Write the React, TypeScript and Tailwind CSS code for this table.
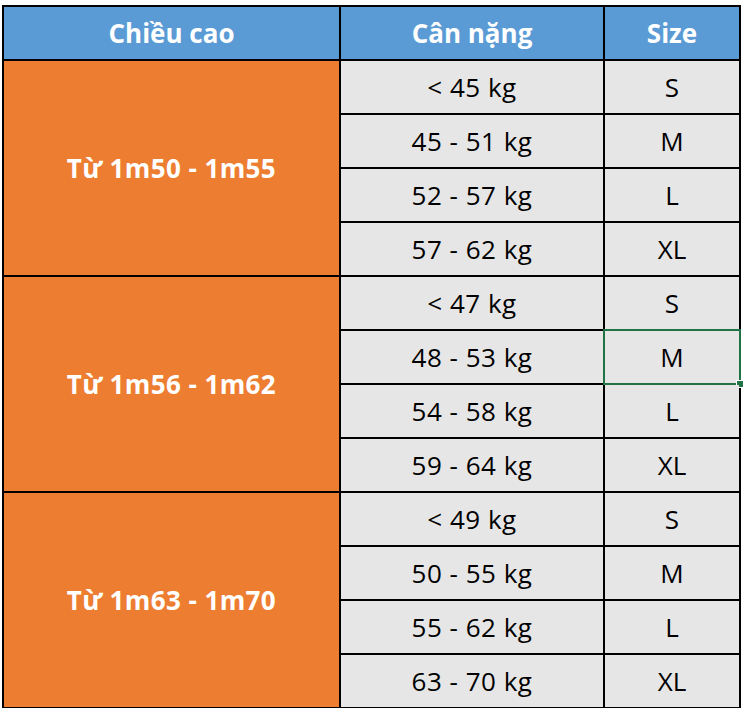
import React, { FC } from 'react';

type Group = { height: string; rows: [string, string][] };

const groups: Group[] = [
    {
        height: 'Từ 1m50 - 1m55',
        rows: [['< 45 kg', 'S'], ['45 - 51 kg', 'M'], ['52 - 57 kg', 'L'], ['57 - 62 kg', 'XL']],
    },
    {
        height: 'Từ 1m56 - 1m62',
        rows: [['< 47 kg', 'S'], ['48 - 53 kg', 'M'], ['54 - 58 kg', 'L'], ['59 - 64 kg', 'XL']],
    },
    {
        height: 'Từ 1m63 - 1m70',
        rows: [['< 49 kg', 'S'], ['50 - 55 kg', 'M'], ['55 - 62 kg', 'L'], ['63 - 70 kg', 'XL']],
    },
];

const font = { fontFamily: '"Open Sans", "Noto Sans", sans-serif' };

const App: FC = () => {
    return (
        <div className="w-[744px] h-[708px] bg-white pt-[5px] pl-[2px]" style={font}>
            <div className="grid w-[739px] grid-cols-[335px_262px_134px] auto-rows-[52px] gap-[2px] p-[2px] bg-black text-[26px]">
                {/* header */}
                {['Chiều cao', 'Cân nặng', 'Size'].map(h => (
                    <div key={h} className="flex items-center justify-center bg-[#5b9bd5] text-white font-bold">
                        {h}
                    </div>
                ))}

                {groups.map((g, gi) => (
                    <React.Fragment key={g.height}>
                        {g.rows.map(([weight, size], ri) => (
                            <React.Fragment key={weight}>
                                {ri === 0 && (
                                    <div className="row-span-4 flex items-center justify-center bg-[#ed7d31] text-white font-bold tracking-[0.4px]">
                                        {g.height}
                                    </div>
                                )}
                                <div className="flex items-center justify-center bg-[#e7e6e6] text-black tracking-[0.5px]">
                                    {weight}
                                </div>
                                <div className="relative flex items-center justify-center bg-[#e7e6e6] text-black">
                                    {size}
                                    {/* selected cell in the spreadsheet */}
                                    {gi === 1 && ri === 1 && (
                                        <>
                                            <span className="absolute -inset-[2px] border-2 border-[#217346]" />
                                            <span className="absolute -right-[4px] -bottom-[4px] w-[6px] h-[6px] bg-[#217346] outline outline-1 outline-white" />
                                        </>
                                    )}
                                </div>
                            </React.Fragment>
                        ))}
                    </React.Fragment>
                ))}
            </div>
        </div>
    );
};

export default App;
